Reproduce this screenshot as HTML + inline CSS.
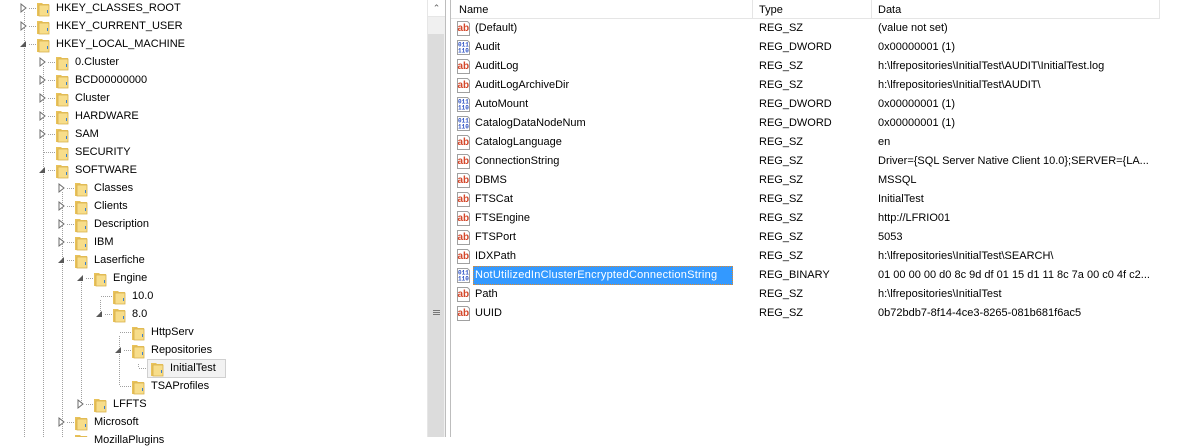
<!DOCTYPE html>
<html><head><meta charset="utf-8"><style>
*{margin:0;padding:0;box-sizing:border-box}
body{width:1201px;height:437px;overflow:hidden;background:#fff;font-family:"Liberation Sans",sans-serif;font-size:11px;color:#000;position:relative}
.t{position:absolute;white-space:nowrap;line-height:14px}
</style></head><body>
<svg width="427" height="437" style="position:absolute;left:0;top:0">
<defs>
<g id="fold"><path d="M1 2 h5 l1 1 h6 v12 h-12z" fill="#e8c25a"/><path d="M3 4 h10 v11 h-10z" fill="#f7dd8a" stroke="#d7b04a" stroke-width="0.8"/><rect x="11" y="9" width="1" height="3" fill="#3a7fd0"/></g>
<polygon id="cl" points="0,0 5,4 0,8" fill="#fff" stroke="#6d6d6d" stroke-width="1"/>
<polygon id="op" points="6,0 6,6 0,6" fill="#595959"/>
</defs>
<g stroke="#a0a0a0" stroke-dasharray="1,1" stroke-width="1" fill="none">
<path d="M24.5 12 V437 M43.5 66 V437 M62.5 192 V437 M81.5 282 V404 M100.5 300 V314 M119.5 336 V386 M138.5 364 V368"/>
<path d="M29 8.5H36M29 26.5H36M29 44.5H36"/>
<path d="M48 62.5H55M48 80.5H55M48 98.5H55M48 116.5H55M48 134.5H55M44 152.5H55M48 170.5H55"/>
<path d="M67 188.5H74M67 206.5H74M67 224.5H74M67 242.5H74M67 260.5H74M67 422.5H74"/>
<path d="M86 278.5H93M86 404.5H93"/>
<path d="M101 296.5H112M105 314.5H112"/>
<path d="M120 332.5H131M124 350.5H131M120 386.5H131"/>
<path d="M139 368.5H150"/>
</g>
<use href="#cl" x="21" y="4"/><use href="#cl" x="21" y="22"/><use href="#op" x="20" y="41"/>
<use href="#cl" x="40" y="58"/><use href="#cl" x="40" y="76"/><use href="#cl" x="40" y="94"/><use href="#cl" x="40" y="112"/><use href="#cl" x="40" y="130"/><use href="#op" x="39" y="167"/>
<use href="#cl" x="59" y="184"/><use href="#cl" x="59" y="202"/><use href="#cl" x="59" y="220"/><use href="#cl" x="59" y="238"/><use href="#op" x="58" y="257"/>
<use href="#op" x="77" y="275"/><use href="#op" x="96" y="311"/><use href="#op" x="115" y="347"/>
<use href="#cl" x="78" y="400"/><use href="#cl" x="59" y="418"/>
<rect x="147.5" y="359.5" width="78" height="18" fill="#f2f2f2" stroke="#d0d0d0"/>
<use href="#fold" x="36" y="1"/><use href="#fold" x="36" y="19"/><use href="#fold" x="36" y="37"/>
<use href="#fold" x="55" y="55"/><use href="#fold" x="55" y="73"/><use href="#fold" x="55" y="91"/><use href="#fold" x="55" y="109"/><use href="#fold" x="55" y="127"/><use href="#fold" x="55" y="145"/><use href="#fold" x="55" y="163"/>
<use href="#fold" x="74" y="181"/><use href="#fold" x="74" y="199"/><use href="#fold" x="74" y="217"/><use href="#fold" x="74" y="235"/><use href="#fold" x="74" y="253"/>
<use href="#fold" x="93" y="271"/><use href="#fold" x="112" y="289"/><use href="#fold" x="112" y="307"/>
<use href="#fold" x="131" y="325"/><use href="#fold" x="131" y="343"/><use href="#fold" x="150" y="361"/><use href="#fold" x="131" y="379"/>
<use href="#fold" x="93" y="397"/><use href="#fold" x="74" y="415"/><use href="#fold" x="74" y="433"/>
</svg>
<div class="t" style="left:56px;top:1px">HKEY_CLASSES_ROOT</div>
<div class="t" style="left:56px;top:19px">HKEY_CURRENT_USER</div>
<div class="t" style="left:56px;top:37px">HKEY_LOCAL_MACHINE</div>
<div class="t" style="left:75px;top:55px">0.Cluster</div>
<div class="t" style="left:75px;top:73px">BCD00000000</div>
<div class="t" style="left:75px;top:91px">Cluster</div>
<div class="t" style="left:75px;top:109px">HARDWARE</div>
<div class="t" style="left:75px;top:127px">SAM</div>
<div class="t" style="left:75px;top:145px">SECURITY</div>
<div class="t" style="left:75px;top:163px">SOFTWARE</div>
<div class="t" style="left:94px;top:181px">Classes</div>
<div class="t" style="left:94px;top:199px">Clients</div>
<div class="t" style="left:94px;top:217px">Description</div>
<div class="t" style="left:94px;top:235px">IBM</div>
<div class="t" style="left:94px;top:253px">Laserfiche</div>
<div class="t" style="left:113px;top:271px">Engine</div>
<div class="t" style="left:132px;top:289px">10.0</div>
<div class="t" style="left:132px;top:307px">8.0</div>
<div class="t" style="left:151px;top:325px">HttpServ</div>
<div class="t" style="left:151px;top:343px">Repositories</div>
<div class="t" style="left:170px;top:361px">InitialTest</div>
<div class="t" style="left:151px;top:379px">TSAProfiles</div>
<div class="t" style="left:113px;top:397px">LFFTS</div>
<div class="t" style="left:94px;top:415px">Microsoft</div>
<div class="t" style="left:94px;top:433px">MozillaPlugins</div>

<div style="position:absolute;left:427px;top:0;width:18px;height:437px;background:#f0f0f0;border-left:1px solid #e6e6e6"></div>
<div style="position:absolute;left:428px;top:0;width:17px;height:17px;background:#fff;border-bottom:1px solid #e6e6e6;text-align:center;font-size:9px;line-height:17px;color:#606060">&#8963;</div>
<div style="position:absolute;left:428px;top:34px;width:16px;height:403px;background:#dcdcdc"></div>
<div style="position:absolute;left:433px;top:310px;width:7px;height:1px;background:#777;box-shadow:0 2px 0 #777,0 4px 0 #777"></div>
<div style="position:absolute;left:445px;top:0;width:6px;height:437px;background:#fff;border-left:1px solid #bdbdbd;border-right:1px solid #bdbdbd"></div>

<div style="position:absolute;left:451px;top:0;width:709px;height:19px;border-bottom:1px solid #e5e5e5;border-right:1px solid #e5e5e5"></div>
<div style="position:absolute;left:752px;top:0;width:1px;height:19px;background:#e5e5e5"></div>
<div style="position:absolute;left:871px;top:0;width:1px;height:19px;background:#e5e5e5"></div>
<div class="t" style="left:459px;top:3px">Name</div>
<div class="t" style="left:759px;top:3px">Type</div>
<div class="t" style="left:878px;top:3px">Data</div>

<svg width="20" height="437" style="position:absolute;left:455px;top:0">
<defs>
<g id="ab"><path d="M2.5 1.5h10l2 2v12h-12z" fill="#fff" stroke="#a0a0a0"/><text x="2.5" y="11" font-family="Liberation Sans" font-weight="bold" font-size="10" fill="#d4472a">ab</text></g>
<g id="bn"><path d="M2.5 1.5h10l2 2v12h-12z" fill="#fff" stroke="#a0a0a0"/><text x="3" y="7.5" font-family="Liberation Mono" font-weight="bold" font-size="6" fill="#2a4fc4">011</text><text x="3" y="13.5" font-family="Liberation Mono" font-weight="bold" font-size="6" fill="#2a4fc4">110</text></g>
</defs>
<use href="#ab" y="20"/><use href="#bn" y="39"/><use href="#ab" y="58"/><use href="#ab" y="77"/><use href="#bn" y="96"/><use href="#bn" y="115"/><use href="#ab" y="134"/><use href="#ab" y="153"/><use href="#ab" y="172"/><use href="#ab" y="191"/><use href="#ab" y="210"/><use href="#ab" y="229"/><use href="#ab" y="248"/><use href="#bn" y="267"/><use href="#ab" y="286"/><use href="#ab" y="305"/>
</svg>
<div style="position:absolute;left:473px;top:266px;width:260px;height:19px;background:#3399ff;border:1px dotted #e08a2c"></div>

<div class="t" style="left:475px;top:21px">(Default)</div><div class="t" style="left:759px;top:21px">REG_SZ</div><div class="t" style="left:878px;top:21px">(value not set)</div>
<div class="t" style="left:475px;top:40px">Audit</div><div class="t" style="left:759px;top:40px">REG_DWORD</div><div class="t" style="left:878px;top:40px">0x00000001 (1)</div>
<div class="t" style="left:475px;top:59px">AuditLog</div><div class="t" style="left:759px;top:59px">REG_SZ</div><div class="t" style="left:878px;top:59px">h:\lfrepositories\InitialTest\AUDIT\InitialTest.log</div>
<div class="t" style="left:475px;top:78px">AuditLogArchiveDir</div><div class="t" style="left:759px;top:78px">REG_SZ</div><div class="t" style="left:878px;top:78px">h:\lfrepositories\InitialTest\AUDIT\</div>
<div class="t" style="left:475px;top:97px">AutoMount</div><div class="t" style="left:759px;top:97px">REG_DWORD</div><div class="t" style="left:878px;top:97px">0x00000001 (1)</div>
<div class="t" style="left:475px;top:116px">CatalogDataNodeNum</div><div class="t" style="left:759px;top:116px">REG_DWORD</div><div class="t" style="left:878px;top:116px">0x00000001 (1)</div>
<div class="t" style="left:475px;top:135px">CatalogLanguage</div><div class="t" style="left:759px;top:135px">REG_SZ</div><div class="t" style="left:878px;top:135px">en</div>
<div class="t" style="left:475px;top:154px">ConnectionString</div><div class="t" style="left:759px;top:154px">REG_SZ</div><div class="t" style="left:878px;top:154px">Driver={SQL Server Native Client 10.0};SERVER={LA...</div>
<div class="t" style="left:475px;top:173px">DBMS</div><div class="t" style="left:759px;top:173px">REG_SZ</div><div class="t" style="left:878px;top:173px">MSSQL</div>
<div class="t" style="left:475px;top:192px">FTSCat</div><div class="t" style="left:759px;top:192px">REG_SZ</div><div class="t" style="left:878px;top:192px">InitialTest</div>
<div class="t" style="left:475px;top:211px">FTSEngine</div><div class="t" style="left:759px;top:211px">REG_SZ</div><div class="t" style="left:878px;top:211px">http://LFRIO01</div>
<div class="t" style="left:475px;top:230px">FTSPort</div><div class="t" style="left:759px;top:230px">REG_SZ</div><div class="t" style="left:878px;top:230px">5053</div>
<div class="t" style="left:475px;top:249px">IDXPath</div><div class="t" style="left:759px;top:249px">REG_SZ</div><div class="t" style="left:878px;top:249px">h:\lfrepositories\InitialTest\SEARCH\</div>
<div class="t" style="left:475px;top:268px;color:#fff;letter-spacing:0.25px">NotUtilizedInClusterEncryptedConnectionString</div><div class="t" style="left:759px;top:268px">REG_BINARY</div><div class="t" style="left:878px;top:268px">01 00 00 00 d0 8c 9d df 01 15 d1 11 8c 7a 00 c0 4f c2...</div>
<div class="t" style="left:475px;top:287px">Path</div><div class="t" style="left:759px;top:287px">REG_SZ</div><div class="t" style="left:878px;top:287px">h:\lfrepositories\InitialTest</div>
<div class="t" style="left:475px;top:306px">UUID</div><div class="t" style="left:759px;top:306px">REG_SZ</div><div class="t" style="left:878px;top:306px">0b72bdb7-8f14-4ce3-8265-081b681f6ac5</div>
</body></html>
